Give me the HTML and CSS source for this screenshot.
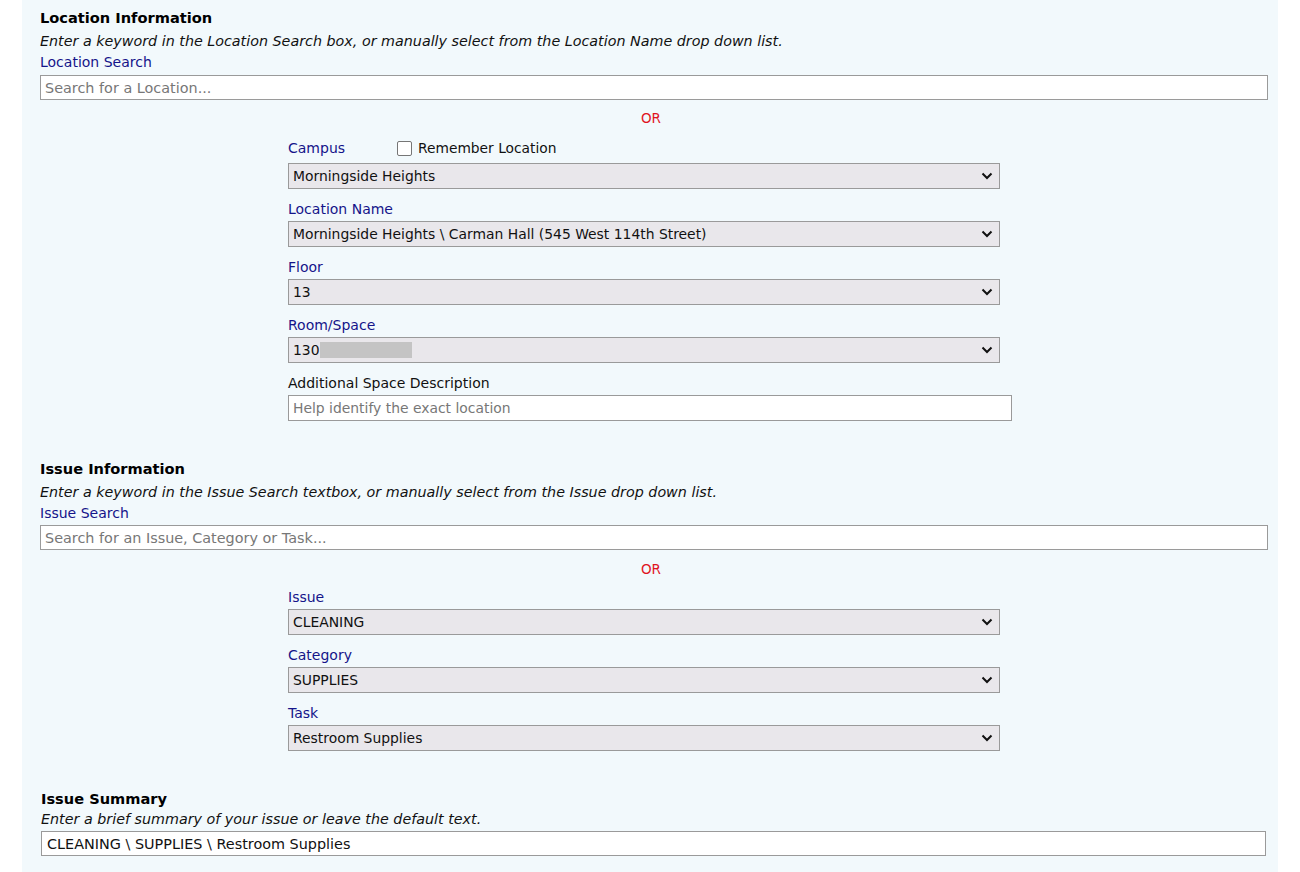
FILE: index.html
```html
<!DOCTYPE html>
<html lang="en">
<head>
    <meta charset="UTF-8">
    <title>Service Request</title>
    <link rel="stylesheet" href="styles.css">
</head>
<body>
    <div class="panel">
        <!-- Location -->
        <div class="section location">
            <h2>Location Information</h2>
            <p class="hint">Enter a keyword in the Location Search box, or manually select from the Location Name drop down list.</p>
            <label class="field-label" for="locSearch">Location Search</label>
            <input class="search" id="locSearch" type="text" placeholder="Search for a Location...">
            <div class="or">OR</div>

            <div class="picker">
                <div class="campus-row">
                    <span class="field-label">Campus</span>
                    <label class="remember"><input type="checkbox" class="check"> Remember Location</label>
                </div>
                <div class="select-wrap">
                    <select><option>Morningside Heights</option></select>
                    <svg class="chev" width="12" height="8" viewBox="0 0 12 8"><path d="M1.5 1.5 L6 6 L10.5 1.5" fill="none" stroke="#111" stroke-width="2"/></svg>
                </div>

                <div class="group">
                    <div class="field-label">Location Name</div>
                    <div class="select-wrap">
                        <select><option>Morningside Heights \ Carman Hall (545 West 114th Street)</option></select>
                        <svg class="chev" width="12" height="8" viewBox="0 0 12 8"><path d="M1.5 1.5 L6 6 L10.5 1.5" fill="none" stroke="#111" stroke-width="2"/></svg>
                    </div>
                </div>

                <div class="group">
                    <div class="field-label">Floor</div>
                    <div class="select-wrap">
                        <select><option>13</option></select>
                        <svg class="chev" width="12" height="8" viewBox="0 0 12 8"><path d="M1.5 1.5 L6 6 L10.5 1.5" fill="none" stroke="#111" stroke-width="2"/></svg>
                    </div>
                </div>

                <div class="group">
                    <div class="field-label">Room/Space</div>
                    <div class="select-wrap">
                        <select><option>130</option></select>
                        <span class="redact"></span>
                        <svg class="chev" width="12" height="8" viewBox="0 0 12 8"><path d="M1.5 1.5 L6 6 L10.5 1.5" fill="none" stroke="#111" stroke-width="2"/></svg>
                    </div>
                </div>

                <div class="group">
                    <div class="plain-label">Additional Space Description</div>
                    <input class="desc" type="text" placeholder="Help identify the exact location">
                </div>
            </div>
        </div>

        <!-- Issue -->
        <div class="section issue">
            <h2>Issue Information</h2>
            <p class="hint">Enter a keyword in the Issue Search textbox, or manually select from the Issue drop down list.</p>
            <label class="field-label" for="issueSearch">Issue Search</label>
            <input class="search" id="issueSearch" type="text" placeholder="Search for an Issue, Category or Task...">
            <div class="or">OR</div>

            <div class="picker">
                <div class="group">
                    <div class="field-label">Issue</div>
                    <div class="select-wrap">
                        <select><option>CLEANING</option></select>
                        <svg class="chev" width="12" height="8" viewBox="0 0 12 8"><path d="M1.5 1.5 L6 6 L10.5 1.5" fill="none" stroke="#111" stroke-width="2"/></svg>
                    </div>
                </div>
                <div class="group">
                    <div class="field-label">Category</div>
                    <div class="select-wrap">
                        <select><option>SUPPLIES</option></select>
                        <svg class="chev" width="12" height="8" viewBox="0 0 12 8"><path d="M1.5 1.5 L6 6 L10.5 1.5" fill="none" stroke="#111" stroke-width="2"/></svg>
                    </div>
                </div>
                <div class="group">
                    <div class="field-label">Task</div>
                    <div class="select-wrap">
                        <select><option>Restroom Supplies</option></select>
                        <svg class="chev" width="12" height="8" viewBox="0 0 12 8"><path d="M1.5 1.5 L6 6 L10.5 1.5" fill="none" stroke="#111" stroke-width="2"/></svg>
                    </div>
                </div>
            </div>
        </div>

        <!-- Summary -->
        <div class="section summary">
            <h2>Issue Summary</h2>
            <p class="hint tight">Enter a brief summary of your issue or leave the default text.</p>
            <input class="search summary-input" type="text" value="CLEANING \ SUPPLIES \ Restroom Supplies">
        </div>
    </div>
</body>
</html>
```

FILE: styles.css
```css
body {
    margin: 0;
    background: #ffffff;
    font-family: "DejaVu Sans", Verdana, sans-serif;
    font-size: 14px;
    color: #111;
}

.panel {
    margin-left: 22px;
    width: 1256px;
    min-height: 880px;
    background-color: #f2f9fc;
    padding: 7px 10px 0 18px;
    box-sizing: border-box;
}

h2 {
    margin: 0;
    font-size: 14.6px;
    font-weight: bold;
    line-height: 22px;
    color: #000;
}

.hint {
    margin: 1px 0 0;
    font-size: 14.3px;
    font-style: italic;
    line-height: 22px;
}

.hint.tight {
    margin-top: -1px;
    line-height: 20px;
}

.field-label {
    display: block;
    color: #15158a;
    line-height: 20px;
}

.plain-label {
    color: #111;
    line-height: 20px;
}

input[type="text"] {
    font-family: inherit;
    color: #111;
    background: #fff;
    border: 1px solid #9a9a9a;
    box-sizing: border-box;
    outline: none;
}

input::placeholder {
    color: #777;
}

.search {
    display: block;
    width: 100%;
    height: 25px;
    margin-top: 2px;
    padding: 0 4px;
    font-size: 14.4px;
}

.location .search {
    margin-top: 3px;
}

.or {
    text-align: center;
    color: #e0141e;
    font-size: 13.5px;
    line-height: 20px;
    margin-top: 8px;
    padding-right: 6px;
}

.picker {
    margin-left: 248px;
    width: 724px;
    margin-top: 10px;
}

.issue .or {
    margin-top: 9px;
}

.issue .picker {
    margin-top: 8px;
}

.campus-row {
    display: flex;
    align-items: center;
    height: 20px;
    margin-bottom: 5px;
}

.campus-row .field-label {
    width: 109px;
}

.remember {
    display: flex;
    align-items: center;
    gap: 6px;
    font-size: 13.8px;
}

.check {
    appearance: none;
    margin: 0;
    width: 15px;
    height: 15px;
    border: 1.5px solid #767676;
    border-radius: 2px;
    background: #fff;
    box-sizing: border-box;
}

.select-wrap {
    position: relative;
    width: 712px;
}

select {
    appearance: none;
    display: block;
    width: 100%;
    height: 26px;
    margin: 0;
    padding: 0 30px 0 4px;
    font-family: inherit;
    font-size: 13.9px;
    color: #111;
    background: #e9e7eb;
    border: 1px solid #9a9a9a;
    border-radius: 0;
    outline: none;
}

.chev {
    position: absolute;
    right: 7px;
    top: 9px;
    pointer-events: none;
}

.redact {
    position: absolute;
    left: 32px;
    top: 5px;
    width: 92px;
    height: 16px;
    background: #c4c4c4;
}

.group {
    margin-top: 10px;
}

.group:first-child {
    margin-top: 0;
}

.group .field-label {
    margin-bottom: 2px;
}

.plain-label {
    margin-bottom: 2px;
}

.desc {
    display: block;
    width: 724px;
    height: 26px;
    padding: 0 4px;
    font-size: 13.9px;
}

.issue {
    margin-top: 37px;
}

.summary {
    margin-top: 37px;
    padding-left: 1px;
    padding-right: 2px;
}

.summary-input {
    padding-left: 5px;
}
```
